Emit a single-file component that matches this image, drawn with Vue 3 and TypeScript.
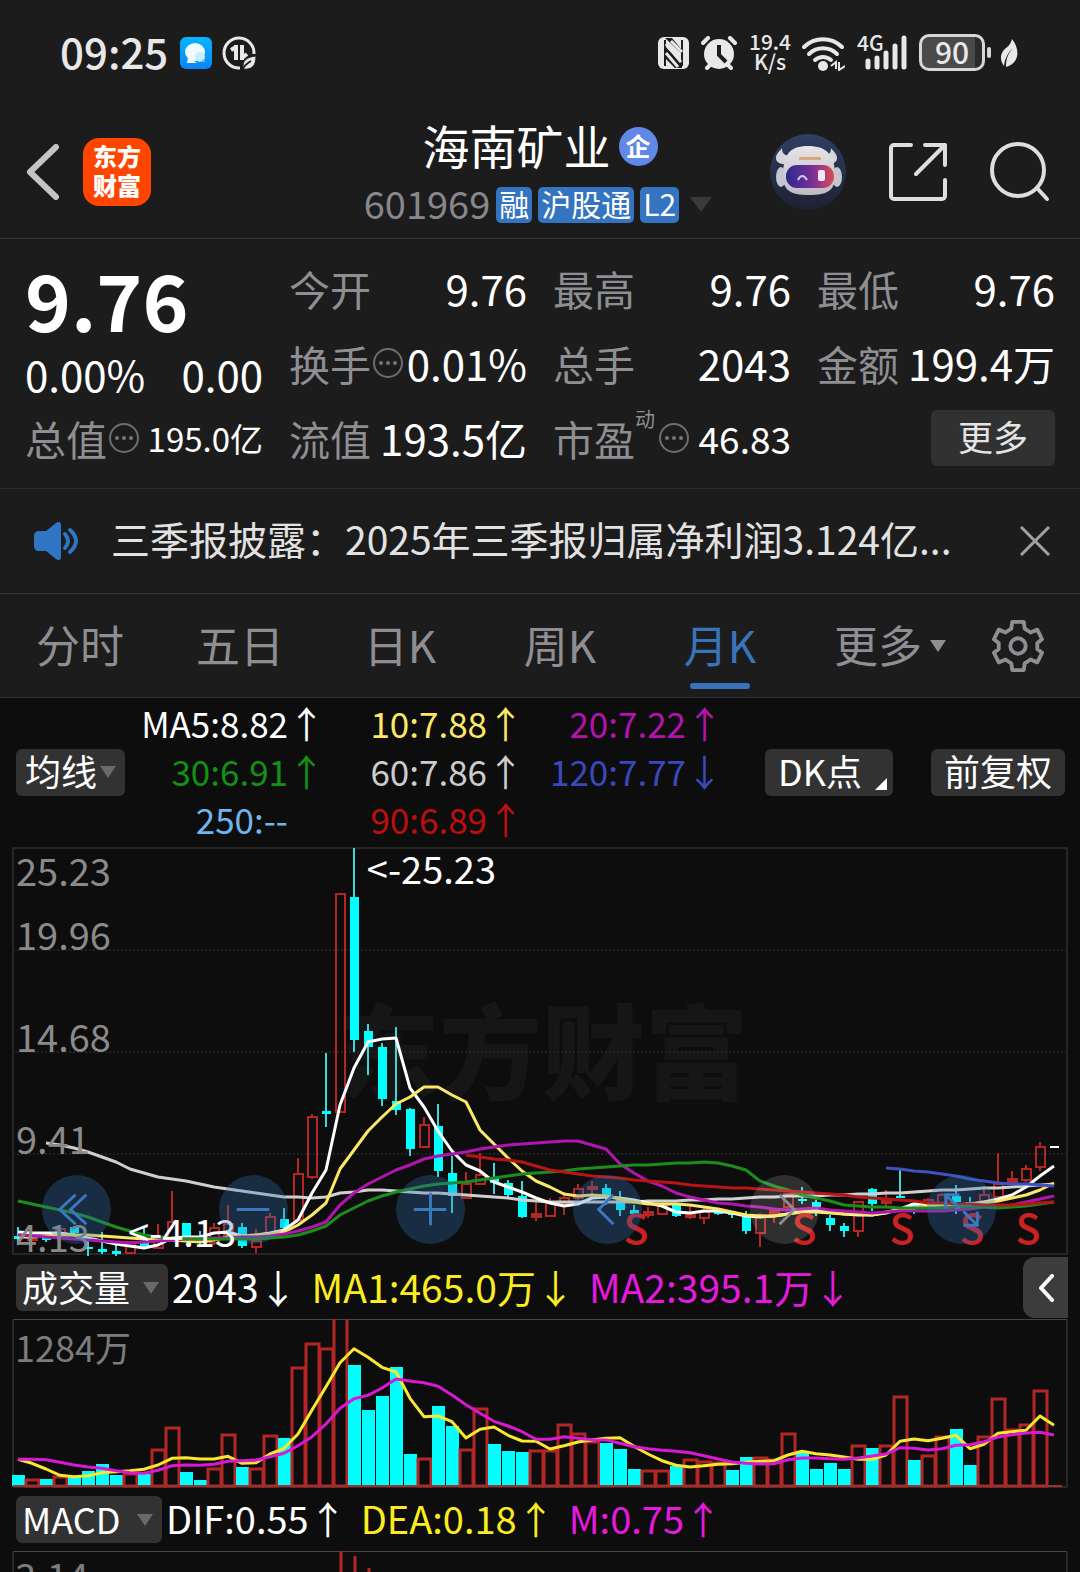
<script setup lang="ts">
import { ref } from 'vue'

type Kind = 'up' | 'down'

const STEP = 14
const FIRST = 18
const px = (i: number) => FIRST + i * STEP

const quotes = [
  { label: '今开', value: '9.76' },
  { label: '最高', value: '9.76' },
  { label: '最低', value: '9.76' },
  { label: '换手', value: '0.01%', info: true },
  { label: '总手', value: '2043' },
  { label: '金额', value: '199.4万' },
  { label: '总值', value: '195.0亿', info: true, size: 'small' },
  { label: '流值', value: '193.5亿' },
  { label: '市盈', value: '46.83', info: true, sup: '动', size: 'medium' },
]

const tabs = ['分时', '五日', '日K', '周K', '月K', '更多']
const activeTab = ref('月K')

const averages = [
  { text: 'MA5:8.82', arrow: '↑', color: '#ffffff' },
  { text: '10:7.88', arrow: '↑', color: '#fbe866' },
  { text: '20:7.22', arrow: '↑', color: '#b413b0' },
  { text: '30:6.91', arrow: '↑', color: '#149014' },
  { text: '60:7.86', arrow: '↑', color: '#cccccc' },
  { text: '120:7.77', arrow: '↓', color: '#3a48bc' },
  { text: '250:--', arrow: '', color: '#70b4ec' },
  { text: '90:6.89', arrow: '↑', color: '#bc0e0e' },
]

const volumeStats = [
  { text: '2043', arrow: '↓', color: '#ffffff' },
  { text: 'MA1:465.0万', arrow: '↓', color: '#fbec20' },
  { text: 'MA2:395.1万', arrow: '↓', color: '#e619df' },
]
const macdStats = [
  { text: 'DIF:0.55', arrow: '↑', color: '#ffffff' },
  { text: 'DEA:0.18', arrow: '↑', color: '#fbec20' },
  { text: 'M:0.75', arrow: '↑', color: '#e619df' },
]

// high, body top, body bottom, low; u = rising, d = falling
const candleRows =
  'd387,396,399,405 u396,397,400,401 d395,397,400,402 u389,389,395,396 d386,387,393,394 ' +
  'd398,407,409,416 d392,409,412,414 d405,411,414,416 u402,402,413,413 d386,402,406,407 ' +
  'u384,400,408,408 u351,382,400,400 d383,383,396,397 d391,397,400,404 u383,388,403,405 ' +
  'u365,384,396,397 d383,387,406,408 u389,401,407,413 u373,377,393,393 d368,379,388,389 ' +
  'u318,334,380,380 u274,277,337,339 d213,271,274,287 u54,54,272,272 d8,57,200,212 ' +
  'd184,191,207,235 d203,207,259,266 d187,261,270,275 d268,269,309,316 u277,285,307,307 ' +
  'd264,286,331,337 d316,333,356,373 u332,344,358,358 u313,335,344,345 d323,338,343,354 ' +
  'd340,343,355,357 d341,356,377,378 u363,374,377,381 u358,363,376,376 u352,358,364,375 ' +
  'u344,349,358,360 u341,347,349,354 d344,348,357,365 d351,358,370,376 d365,370,374,377 ' +
  'u367,372,375,378 u363,366,374,375 d363,364,376,377 u365,375,377,379 u367,372,378,384 ' +
  'd369,371,374,375 d371,373,375,378 d371,375,391,394 u373,375,393,407 u370,371,374,383 ' +
  'u353,354,367,370 d347,359,361,364 d360,362,370,376 d375,378,385,391 d383,386,391,397 ' +
  'u361,362,391,397 d348,349,364,371 u350,360,363,367 d330,356,358,358 d361,363,368,374 ' +
  'u358,360,365,368 u353,355,364,364 d345,356,362,374 d357,362,366,368 u346,355,361,362 ' +
  'u313,344,357,357 u331,339,343,344 u325,329,340,342 u302,307,327,331'

const candles = candleRows.split(' ').map((row, i) => {
  const [high, top, bottom, low] = row.slice(1).split(',').map(Number)
  const kind: Kind = row[0] === 'u' ? 'up' : 'down'
  return { x: px(i), kind, high, top, bottom, low, flat: bottom - top < 5 }
})

const line = (start: number, ys: number[], scale = 1) =>
  ys.map((y, k) => `${px(start + k)},${Math.round((y / scale) * 10) / 10}`).join(' ')

const priceLines = [
  {
    color: '#cfcfcf',
    points: line(2, [303,305,308,312,317,322,329,333,337,339,341,344,347,349,351,353,355,357,357,358,357,353,352,350,350,351,352,353,353,354,355,356,357,358,360,361,362,362,362,362,362,362,362,361,361,361,360,360,359,359,358,357,357,356,356,356,355,355,354,354,353,353,352,351,350,350,349,348,348,347,346,345,344]),
  },
  {
    color: '#ffffff',
    points: line(0, [392,393,393,393,395,398,401,404,406,408,405,398,397,397,393,392,396,395,393,390,380,353,330,265,228,202,199,198,248,267,291,311,325,331,342,347,352,358,363,366,364,358,357,358,360,363,366,372,373,371,371,373,376,377,376,374,370,370,372,374,375,375,373,369,364,364,364,365,364,362,359,355,347,336,326]),
  },
  {
    color: '#fbe866',
    points: line(0, [397,397,396,395,395,395,396,397,398,399,400,400,401,402,400,397,396,395,394,392,385,375,363,329,310,291,277,264,257,247,247,255,262,290,304,318,331,341,347,354,356,355,356,359,362,364,364,364,365,367,369,372,375,376,376,374,372,372,373,374,374,375,372,370,368,366,365,365,364,363,361,358,355,350,343]),
  },
  {
    color: '#b015b0',
    points: line(0, [395,396,397,398,399,400,401,402,403,402,401,400,399,399,398,398,397,397,396,394,391,387,382,365,353,344,337,330,325,319,316,314,312,309,307,305,304,303,302,301,301,305,309,324,333,341,346,353,357,360,363,364,366,367,369,370,369,368,370,371,372,373,372,371,371,371,371,370,369,367,367,365,362,359,356]),
  },
  {
    color: '#1c8c1c',
    points: line(0, [361,364,367,370,373,377,382,387,391,395,397,398,399,399,399,399,399,399,398,397,395,391,386,375,368,361,356,352,349,346,344,343,342,340,338,336,334,333,332,331,329,328,327,326,325,325,324,323,323,322,323,326,330,341,346,350,355,358,361,365,366,367,367,368,368,368,368,367,367,367,368,367,366,364,362]),
  },
  {
    color: '#b81414',
    points: line(32, [315,317,319,320,322,326,330,332,334,336,337,338,340,341,342,343,345,346,347,348,348,349,350,351,352,353,354,355,357,358,359,360,361,363,363,364,364,365,365,365,364,363,362]),
  },
  {
    color: '#4150c0',
    points: line(62, [328,329,331,332,334,336,339,341,343,344,344,345,346]),
  },
]

// thirds of a pixel below the top of the pane
const volumeRows =
  'd675 u686 d686 u677 d678 d663 d641 d675 u668 d672 u596 u531 d667 d691 u653 u552 d651 u653 u555 d565 ' +
  'u352 u278 u293 u180 d345 d481 d438 d352 d612 u623 d468 d528 u597 u473 d583 d602 d606 u600 u600 u521 ' +
  'u548 u572 d578 d597 d657 u661 u661 d648 u628 u632 u637 d659 d620 u620 u628 u548 d608 d657 d640 d657 ' +
  'u585 d594 u585 u437 d629 u614 u558 d538 d645 u558 u444 u537 u522 u421'

const volumes = volumeRows.split(' ').map((row, i) => ({
  x: px(i),
  kind: (row[0] === 'u' ? 'up' : 'down') as Kind,
  top: Math.round(Number(row.slice(1)) / 3),
}))

const volumeLines = [
  {
    color: '#fbe72e',
    points: line(0, [628,640,657,676,680,677,668,665,662,658,645,625,623,627,627,619,640,638,612,595,552,480,410,338,296,322,352,366,445,500,498,515,564,538,531,556,573,574,597,587,576,570,565,563,589,612,632,646,651,647,643,641,637,634,632,615,604,611,615,621,628,628,615,574,567,572,565,556,596,583,550,545,541,498,526], 3),
  },
  {
    color: '#d818d2',
    points: line(0, [628,628,629,637,645,651,655,662,668,670,661,647,645,646,643,634,632,630,620,610,587,560,522,475,446,436,414,387,393,398,409,435,464,490,514,528,545,568,568,560,565,569,570,580,590,596,601,604,608,617,627,636,640,642,641,629,624,624,626,628,624,618,612,593,595,600,596,586,584,575,561,554,549,547,555], 3),
  },
]

const priceLabels = [
  { y: 46, text: '25.23' },
  { y: 110, text: '19.96' },
  { y: 212, text: '14.68' },
  { y: 314, text: '9.41' },
  { y: 412, text: '4.13' },
]
const sellMarks = [636, 804, 902, 972, 1028]

const controls = [
  { name: '最早', d: 'M34 20L18 35L34 50M45 20L29 35L45 50' },
  { name: '缩小', d: 'M18 35H51' },
  { name: '放大', d: 'M18 35H51M35 18V51' },
  { name: '向左', d: 'M41 20L26 35L41 50' },
  { name: '向右', d: 'M30 20L45 35L30 50', muted: true },
  { name: '全屏', d: 'M33 20H19V34M19 20L33 34M37 51H51V37M51 51L37 37' },
]
</script>

<template>
  <div class="app">
    <div class="status">
      <div class="status-side">
        <span class="clock">09:25</span>
        <svg class="msg" viewBox="0 0 32 32" aria-hidden="true">
          <defs>
            <linearGradient id="msgBg" x1="0" y1="0" x2="0" y2="1">
              <stop offset="0" stop-color="#06b6fd" />
              <stop offset="1" stop-color="#0a84f8" />
            </linearGradient>
          </defs>
          <rect width="32" height="32" rx="6" fill="url(#msgBg)" />
          <ellipse cx="15" cy="15" rx="10" ry="9" fill="#f1faff" />
          <path d="M8 20l-1 6h10z" fill="#f1faff" />
          <circle cx="20" cy="20" r="5" fill="#c8ebff" />
          <path d="M20 25h5l-1-3z" fill="#5fc3ff" />
        </svg>
        <svg class="eco" viewBox="0 0 34 34" aria-hidden="true">
          <path d="M32 18A15 15 0 1 0 18 32" fill="none" stroke="#e8e8e8" stroke-width="3" />
          <path d="M9 14l5-3M14 9v15M20 9v15M20 22l5-4" fill="none" stroke="#e8e8e8" stroke-width="4" />
          <path d="M34 20c-9 1-14 4-13 13 9 1 13-3 13-13z" fill="#e8e8e8" stroke="#1c1c1c" stroke-width="1" />
          <path d="M20 34c2-4 4-6 9-9" fill="none" stroke="#1c1c1c" stroke-width="2" />
        </svg>
      </div>
      <div class="status-side">
        <svg class="nfc" viewBox="0 0 31 34" aria-hidden="true">
          <rect x="0" y="1" width="31" height="32" rx="6" fill="#e8e8e8" />
          <path d="M7 4V30M24 4V30" stroke="#1c1c1c" stroke-width="2" />
          <path d="M7 2L24 18V14L14 2zM7 10L24 28V32H17L7 22z" fill="#1c1c1c" />
          <path d="M8 8L23 26M8 17L20 31M13 5L24 16" stroke="#e8e8e8" stroke-width="3" />
        </svg>
        <svg class="alarm" viewBox="0 0 36 34" aria-hidden="true">
          <circle cx="18" cy="18" r="15" fill="#e8e8e8" />
          <path d="M2 7l5-5M34 7l-5-5M6 32l4-4M30 32l-4-4" stroke="#e8e8e8" stroke-width="4" stroke-linecap="round" />
          <path d="M18 9v10l7 7" fill="none" stroke="#1c1c1c" stroke-width="4" />
        </svg>
        <div class="speed"><span>19.4</span><span>K/s</span></div>
        <svg class="wifi" viewBox="0 0 44 36" aria-hidden="true">
          <path d="M3 12a27 27 0 0 1 38 0M8 19a20 20 0 0 1 28 0M14 25a12 12 0 0 1 16 0" fill="none" stroke="#e8e8e8" stroke-width="4" stroke-linecap="round" />
          <circle cx="22" cy="31" r="5" fill="#e8e8e8" />
          <path d="M30 31l5-4v7M38 27v8l6-4" fill="none" stroke="#e8e8e8" stroke-width="2" />
        </svg>
        <svg class="signal" viewBox="0 0 52 38" aria-hidden="true">
          <text x="0" y="17" font-size="21" font-weight="500" fill="#e8e8e8">4G</text>
          <path d="M11 27v6M20 24v9M29 19v14M38 12v21M47 4v29" stroke="#e8e8e8" stroke-width="5" stroke-linecap="round" />
        </svg>
        <div class="battery"><span>90</span></div>
        <svg class="leaf" viewBox="0 0 18 30" aria-hidden="true">
          <path d="M12 1c8 10 8 24-6 28 0-9 2-13 7-19-6 6-8 11-9 18C-2 20 2 13 6 10c3-2 5-5 6-9z" fill="#e8e8e8" />
        </svg>
      </div>
    </div>

    <header class="header">
      <div class="head-left">
        <button class="icon-btn" aria-label="返回">
          <svg class="back" viewBox="0 0 34 56"><path d="M30 3L4 28L30 53" fill="none" stroke="#c4c4c4" stroke-width="6" stroke-linecap="round" stroke-linejoin="round" /></svg>
        </button>
        <a class="logo" href="#">东方<br />财富</a>
      </div>
      <div class="head-center">
        <div class="title-row">
          <h1>海南矿业</h1>
          <span class="corp">企</span>
        </div>
        <div class="code-row">
          <span class="code">601969</span>
          <span class="tag">融</span>
          <span class="tag">沪股通</span>
          <span class="tag">L2</span>
          <i class="tri code-tri"></i>
        </div>
      </div>
      <div class="head-right">
        <button class="icon-btn" aria-label="智能助手">
          <svg class="robot" viewBox="0 0 76 76">
            <defs>
              <linearGradient id="robotBg" x1="0" y1="0" x2="0" y2="1">
                <stop offset="0" stop-color="#2d3f63" />
                <stop offset="1" stop-color="#1d2230" />
              </linearGradient>
              <linearGradient id="visor" x1="0" y1="0" x2="1" y2="0">
                <stop offset="0" stop-color="#2b2a8c" />
                <stop offset=".55" stop-color="#7a2f96" />
                <stop offset="1" stop-color="#d84e56" />
              </linearGradient>
              <linearGradient id="shell" x1="0" y1="0" x2="0" y2="1">
                <stop offset="0" stop-color="#e6e4e8" />
                <stop offset="1" stop-color="#bdbbc4" />
              </linearGradient>
            </defs>
            <circle cx="38" cy="38" r="38" fill="url(#robotBg)" />
            <path d="M12 14c0 5 2 7 7 8l-5 8c-4 0-8-2-8-6 0-4 3-6 6-10zM61 14c0 5-2 7-7 8l5 8c4 0 8-2 8-6 0-4-3-6-6-10z" fill="#d6d5da" />
            <ellipse cx="11" cy="43" rx="5" ry="10" fill="#c7c6cd" />
            <ellipse cx="67" cy="43" rx="5" ry="10" fill="#c7c6cd" />
            <path d="M38 12c-18 0-25 8-25 30 0 14 7 19 26 19s26-5 26-19c0-22-9-30-27-30z" fill="url(#shell)" />
            <rect x="16" y="31" width="48" height="23" rx="11" fill="url(#visor)" />
            <rect x="29" y="23" width="22" height="3" rx="1" fill="#d8a77c" />
            <path d="M28 46q4-8 9 0" fill="none" stroke="#d8c8ff" stroke-width="2" />
            <rect x="48" y="36" width="7" height="11" rx="2" fill="#f4e6ff" />
          </svg>
        </button>
        <button class="icon-btn" aria-label="分享">
          <svg class="share" viewBox="0 0 58 58"><path d="M22 2H5a3 3 0 0 0-3 3V53a3 3 0 0 0 3 3H53a3 3 0 0 0 3-3V37M36 2H56V22M56 2L27 31" fill="none" stroke="#dedede" stroke-width="4" stroke-linecap="round" stroke-linejoin="round" /></svg>
        </button>
        <button class="icon-btn" aria-label="搜索">
          <svg class="search" viewBox="0 0 60 60"><circle cx="28" cy="28" r="26" fill="none" stroke="#dedede" stroke-width="4" /><path d="M47 46L57 57" stroke="#dedede" stroke-width="4" stroke-linecap="round" /></svg>
        </button>
      </div>
    </header>

    <section class="quote">
      <div class="price">
        <strong>9.76</strong>
        <div class="change"><span>0.00%</span><span>0.00</span></div>
      </div>
      <div v-for="q in quotes" :key="q.label" class="cell">
        <span class="label">{{ q.label }}</span>
        <sup v-if="q.sup">{{ q.sup }}</sup>
        <svg v-if="q.info" class="info" viewBox="0 0 32 32" aria-hidden="true">
          <circle cx="17" cy="16" r="14" fill="none" stroke="#6e6e70" stroke-width="2" />
          <path d="M10 16h0M17 16h0M24 16h0" stroke="#77777a" stroke-width="4" stroke-linecap="round" />
        </svg>
        <span class="value" :class="q.size">{{ q.value }}</span>
      </div>
      <div class="cell end"><button class="more">更多</button></div>
    </section>

    <section class="news">
      <svg class="speaker" viewBox="0 0 44 38" aria-hidden="true">
        <path d="M5 9h7L22 1c3-2 5-1 5 2v32c0 3-2 4-5 2L12 29H5c-3 0-5-2-5-5V14c0-3 2-5 5-5z" fill="#2f75c4" />
        <path d="M31 12q6 7 0 14M36 8q12 11 0 22" fill="none" stroke="#2f75c4" stroke-width="4" stroke-linecap="round" />
      </svg>
      <a href="#">三季报披露：2025年三季报归属净利润3.124亿...</a>
      <button class="icon-btn" aria-label="关闭">
        <svg class="close" viewBox="0 0 30 30"><path d="M1 1L29 29M29 1L1 29" stroke="#a2a2a2" stroke-width="3" /></svg>
      </button>
    </section>

    <nav class="tabs">
      <button v-for="t in tabs" :key="t" class="tab" :class="{ active: t === activeTab, wide: t === '更多' }" @click="activeTab = t">
        <span>{{ t }}</span><i v-if="t === '更多'" class="tri tab-tri"></i>
      </button>
      <button class="icon-btn settings" aria-label="设置">
        <svg class="gear" viewBox="0 0 54 54">
          <path d="M21 2H33L34 9L40 13L47 10L52 20L47 24V30L52 34L47 44L40 41L34 45L33 52H21L20 45L14 41L7 44L2 34L7 30V24L2 20L7 10L14 13L20 9Z" fill="none" stroke="#8e8e93" stroke-width="4" stroke-linejoin="round" />
          <circle cx="27" cy="27" r="8" fill="none" stroke="#8e8e93" stroke-width="4" />
        </svg>
      </button>
    </nav>

    <main class="charts">
      <div class="ma-bar">
        <button class="chip ma-chip"><span>均线</span><i class="tri"></i></button>
        <div class="ma-grid">
          <div v-for="m in averages" :key="m.text" class="ma" :style="{ color: m.color }">
            <span>{{ m.text }}</span><span class="arrow">{{ m.arrow }}</span>
          </div>
        </div>
        <button class="chip dk"><span>DK点</span><i class="corner"></i></button>
        <button class="chip"><span>前复权</span></button>
      </div>

      <div class="price-pane">
        <svg class="plot open" viewBox="0 0 1080 410">
          <text x="336" y="246" font-size="103" font-weight="900" fill="#161616">东方财富</text>
          <path d="M13 2H1067V408H13Z" fill="none" stroke="#262626" stroke-width="2" />
          <path d="M13 104H1067M13 206H1067M13 308H1067" stroke="#222222" stroke-width="2" stroke-dasharray="2 2" />
          <g transform="translate(0 -6)">
            <g v-for="c in candles" :key="c.x">
              <template v-if="c.kind === 'down'">
                <path :d="`M${c.x} ${c.high}V${c.low}`" stroke="#3fd6d6" stroke-width="2" />
                <rect :x="c.x - 4" :y="c.top" width="9" :height="c.bottom - c.top" fill="#00ffff" />
              </template>
              <template v-else>
                <path :d="`M${c.x} ${c.high}V${c.top}M${c.x} ${c.bottom}V${c.low}`" stroke="#b42626" stroke-width="2" />
                <rect :x="c.x - 4" :y="c.top" width="9" :height="c.bottom - c.top" :fill="c.flat ? '#b42626' : 'none'" stroke="#b42626" stroke-width="2" />
              </template>
            </g>
            <path d="M1050 307h9" stroke="#ffffff" stroke-width="2" />
            <polyline v-for="l in priceLines" :key="l.color" :points="l.points" fill="none" :stroke="l.color" stroke-width="3" stroke-linejoin="round" />
          </g>
          <text v-for="p in priceLabels" :key="p.text" x="16" :y="p.y - 6" font-size="38" fill="#8a8a8a">{{ p.text }}</text>
          <text x="496" y="38" font-size="38" fill="#ffffff" text-anchor="end">&lt;-25.23</text>
          <text x="236" y="401" font-size="38" fill="#ffffff" text-anchor="end">&lt;-4.13</text>
          <text v-for="s in sellMarks" :key="s" :x="s" y="398" font-size="41" font-weight="500" fill="#c82222" text-anchor="middle">S</text>
        </svg>
        <div class="controls">
          <button v-for="c in controls" :key="c.name" class="ctl" :class="{ muted: c.muted }" :aria-label="c.name">
            <svg viewBox="0 0 70 70"><path :d="c.d" fill="none" stroke="currentColor" stroke-width="3" /></svg>
          </button>
        </div>
      </div>

      <div class="stat-bar">
        <button class="chip vol-chip"><span>成交量</span><i class="tri"></i></button>
        <div v-for="s in volumeStats" :key="s.text" class="stat" :style="{ color: s.color }">{{ s.text }}<span>{{ s.arrow }}</span></div>
        <button class="drawer" aria-label="展开">
          <svg viewBox="0 0 16 28"><path d="M14 2L3 14L14 26" fill="none" stroke="#ffffff" stroke-width="4" stroke-linecap="round" stroke-linejoin="round" /></svg>
        </button>
      </div>

      <svg class="plot" viewBox="0 0 1080 169">
        <path d="M13 0.500H1067V168H13Z" fill="none" stroke="#464646" stroke-width="1" />
        <text x="15" y="43" font-size="36" fill="#7c7c7c">1284万</text>
        <g transform="translate(0 -69)">
          <template v-for="v in volumes" :key="v.x">
            <rect v-if="v.kind === 'down'" :x="v.x - 6" :y="v.top" width="13" :height="236 - v.top" fill="#00ffff" />
            <rect v-else :x="v.x - 6" :y="v.top + 1" width="13" :height="235 - v.top" fill="none" stroke="#b42626" stroke-width="3" />
          </template>
          <path d="M13 236H1062" stroke="#a03030" stroke-width="2" />
          <polyline v-for="l in volumeLines" :key="l.color" :points="l.points" fill="none" :stroke="l.color" stroke-width="3" stroke-linejoin="round" />
        </g>
      </svg>

      <div class="stat-bar macd">
        <button class="chip macd-chip"><span>MACD</span><i class="tri"></i></button>
        <div v-for="s in macdStats" :key="s.text" class="stat" :style="{ color: s.color }">{{ s.text }}<span>{{ s.arrow }}</span></div>
      </div>

      <svg class="plot" viewBox="0 0 1080 169">
        <path d="M13 0.500H1067V168H13Z" fill="none" stroke="#464646" stroke-width="1" />
        <text x="15" y="40" font-size="38" fill="#7c7c7c">3.14</text>
        <path d="M341 0V168M355 5V168M369 17V168" stroke="#b42626" stroke-width="3" />
      </svg>
    </main>
  </div>
</template>

<style>
body {
  margin: 0;
  background: #0d0d0d;
}
</style>

<style scoped>
.app {
  height: 100vh;
  overflow: hidden;
  background: #1c1c1c;
  color: #fff;
  font-family: "Noto Sans CJK SC", "Noto Sans", sans-serif;
}
.app *,
.app {
  box-sizing: border-box;
}
button {
  margin: 0;
  padding: 0;
  border: 0;
  background: none;
  color: inherit;
  font: inherit;
}
a {
  color: inherit;
  text-decoration: none;
}
svg {
  display: block;
  flex: none;
}
.icon-btn {
  display: flex;
}
.tri {
  flex: none;
  border-style: solid;
  border-color: #6a6a6a transparent transparent;
  border-width: 12px 8px 0;
}

.status {
  display: flex;
  align-items: center;
  justify-content: space-between;
  height: 105px;
  padding: 0 62px 0 60px;
  color: #e8e8e8;
}
.status-side {
  display: flex;
  align-items: center;
}
.clock {
  margin-right: 12px;
  padding-bottom: 4px;
  font-size: 42px;
  line-height: 50px;
  font-weight: 500;
}
.msg { width: 32px; margin-right: 10px; }
.eco { width: 34px; }
.nfc { width: 31px; margin-right: 12px; }
.alarm { width: 36px; margin-right: 12px; }
.speed {
  display: flex;
  flex-direction: column;
  align-items: center;
  width: 42px;
  margin-right: 10px;
  padding-bottom: 3px;
  font-size: 21px;
  line-height: 20px;
  font-weight: 500;
}
.wifi { width: 44px; margin-right: 12px; }
.signal { width: 52px; margin-right: 10px; overflow: visible; }
.battery {
  position: relative;
  display: flex;
  align-items: center;
  justify-content: center;
  width: 66px;
  height: 37px;
  margin-right: 15px;
  padding-bottom: 4px;
  border: 3px solid #d8d8d8;
  border-radius: 10px;
  background: linear-gradient(90deg, #4a4a4a 88%, #2a2a2a 88%);
  font-size: 30px;
  line-height: 30px;
  font-weight: 500;
}
.battery::after {
  content: "";
  position: absolute;
  right: -9px;
  top: 10px;
  width: 4px;
  height: 11px;
  border-radius: 2px;
  background: #d8d8d8;
}
.leaf { width: 18px; }

.header {
  display: grid;
  grid-template-columns: 1fr auto 1fr;
  align-items: center;
  height: 134px;
  padding: 0 30px 0 26px;
  border-bottom: 1px solid #333;
}
.head-left {
  display: flex;
  align-items: center;
  gap: 23px;
}
.back { width: 34px; }
.logo {
  width: 68px;
  height: 68px;
  padding-top: 3px;
  border-radius: 16px;
  background: #ff4500;
  font-size: 24px;
  line-height: 29px;
  font-weight: 900;
  text-align: center;
}
.head-center {
  display: flex;
  flex-direction: column;
  align-items: center;
  padding-top: 2px;
}
.title-row {
  display: flex;
  align-items: center;
  gap: 8px;
  height: 64px;
  padding-left: 4px;
}
h1 {
  margin: 0;
  padding-bottom: 4px;
  font-size: 47px;
  line-height: 60px;
  font-weight: 400;
}
.corp {
  width: 39px;
  height: 39px;
  border-radius: 50%;
  background: #6088e6;
  font-size: 25px;
  line-height: 36px;
  font-weight: 700;
  text-align: center;
}
.code-row {
  display: flex;
  align-items: center;
  gap: 6px;
  height: 52px;
}
.code {
  padding-bottom: 4px;
  color: #87878c;
  font-size: 38px;
  line-height: 48px;
}
.tag {
  height: 36px;
  padding: 0 3px;
  border-radius: 5px;
  background: #3474c0;
  font-size: 30px;
  line-height: 33px;
}
.code-tri {
  margin-left: 5px;
  border-width: 15px 11px 0;
  border-top-color: #3a3a3a;
}
.head-right {
  display: flex;
  align-items: center;
  justify-content: flex-end;
  gap: 43px;
}
.robot { width: 76px; }
.share { width: 58px; }
.search { width: 60px; }

.quote {
  display: grid;
  grid-template-columns: repeat(4, 1fr);
  grid-auto-rows: 75px;
  column-gap: 26px;
  padding: 12px 25px;
  border-bottom: 1px solid #2a2a2a;
}
.price {
  grid-row: span 2;
  display: flex;
  flex-direction: column;
}
.price strong {
  font-size: 78px;
  line-height: 94px;
  font-weight: 700;
}
.change {
  display: flex;
  justify-content: space-between;
  font-size: 42px;
  line-height: 58px;
}
.cell {
  display: flex;
  align-items: center;
  padding-bottom: 2px;
  font-size: 42px;
  line-height: 72px;
  white-space: nowrap;
}
.label {
  color: #8e8e93;
  font-size: 41px;
}
.cell sup {
  align-self: flex-start;
  width: 22px;
  color: #8e8e93;
  font-size: 20px;
  line-height: 36px;
}
.info { width: 32px; }
.value { margin-left: auto; }
.value.small { font-size: 33px; }
.value.medium { font-size: 37px; }
.end { justify-content: flex-end; }
.more {
  width: 124px;
  height: 56px;
  padding-bottom: 4px;
  border-radius: 6px;
  background: #313131;
  color: #e4e4e4;
  font-size: 35px;
  line-height: 50px;
}

.news {
  display: flex;
  align-items: center;
  height: 105px;
  padding: 0 30px 0 34px;
  border-bottom: 1px solid #333;
}
.speaker { width: 44px; }
.news a {
  flex: 1;
  margin-left: 33px;
  padding-bottom: 6px;
  color: #e2e2e2;
  font-size: 39px;
  line-height: 60px;
  white-space: nowrap;
}
.close { width: 30px; }

.tabs {
  display: grid;
  grid-template-columns: repeat(6, 4fr) 3fr;
  height: 104px;
  border-bottom: 1px solid #333;
  color: #8e8e93;
  font-size: 44px;
}
.tab {
  position: relative;
  display: flex;
  align-items: center;
  justify-content: center;
  gap: 8px;
}
.tab span { padding-bottom: 4px; }
.tab.wide { padding-left: 20px; }
.active { color: #3974ba; }
.active::after {
  content: "";
  position: absolute;
  bottom: 8px;
  width: 60px;
  height: 6px;
  border-radius: 3px;
  background: #3974ba;
}
.tab-tri {
  border-top-color: #8e8e93;
}
.settings {
  align-items: center;
  justify-content: center;
  padding-right: 4px;
}
.gear { width: 52px; }

.charts { background: #0d0d0d; }
.plot {
  width: 100%;
  font-family: inherit;
}
.plot.open { overflow: visible; }
.chip {
  display: flex;
  align-items: center;
  justify-content: center;
  height: 47px;
  border-radius: 6px;
  background: #323232;
  font-size: 36px;
  line-height: 42px;
  white-space: nowrap;
}
.chip span { padding-bottom: 4px; }
.ma-bar {
  display: flex;
  align-items: center;
  height: 148px;
  padding: 0 15px 0 16px;
}
.ma-bar .chip { padding: 0 13px; }
.ma-bar .ma-chip {
  gap: 3px;
  padding: 0 9px;
}
.ma-grid {
  flex: 1;
  display: grid;
  grid-template-columns: repeat(3, 199px);
  padding-bottom: 2px;
}
.ma {
  display: flex;
  justify-content: flex-end;
  font-size: 35px;
  line-height: 48px;
  white-space: nowrap;
}
.arrow {
  width: 36px;
  font-size: 37px;
}
.ma-bar .dk {
  position: relative;
  width: 128px;
  margin-right: 38px;
  justify-content: flex-start;
}
.corner {
  position: absolute;
  right: 6px;
  bottom: 6px;
  border-style: solid;
  border-width: 0 0 12px 12px;
  border-color: transparent transparent #fff;
}
.price-pane { position: relative; }
.controls {
  position: absolute;
  left: 42px;
  right: 84px;
  bottom: 12px;
  display: flex;
  justify-content: space-between;
}
.ctl {
  width: 69px;
  height: 69px;
  border-radius: 50%;
  background: rgba(50, 116, 190, 0.3);
  color: #3c78c0;
}
.ctl.muted {
  background: rgba(255, 255, 255, 0.14);
  color: #8c8c8c;
}
.stat-bar {
  display: flex;
  align-items: center;
  height: 63px;
  padding: 0 12px 0 16px;
}
.vol-chip, .macd-chip {
  justify-content: space-between;
  padding: 0 9px 0 6px;
  margin-right: 4px;
}
.vol-chip { width: 152px; }
.macd-chip { width: 146px; }
.stat {
  margin-right: 14px;
  padding-bottom: 4px;
  font-size: 39px;
  line-height: 58px;
  white-space: nowrap;
}
.macd .stat { font-size: 38px; }
.drawer {
  display: flex;
  align-items: center;
  justify-content: center;
  width: 45px;
  height: 61px;
  margin-left: auto;
  border-radius: 12px 0 0 12px;
  background: #3c3c3c;
}
.drawer svg { width: 16px; }
</style>
